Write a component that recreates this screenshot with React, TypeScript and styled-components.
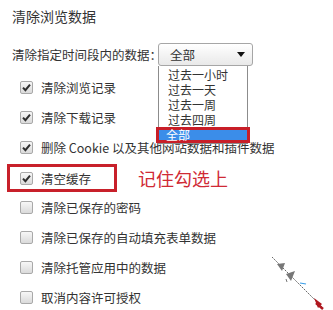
import React from 'react';
import styled, { createGlobalStyle } from 'styled-components';

const GlobalStyle = createGlobalStyle`
  html, body {
    margin: 0;
    padding: 0;
    background: #fff;
  }
  body {
    font-family: "Noto Sans CJK SC", "DejaVu Sans", sans-serif;
    color: #333;
  }
`;

const ranges = ['过去一小时', '过去一天', '过去一周', '过去四周', '全部'];

type Item = { label: string; checked: boolean; highlight?: boolean };

const items: Item[] = [
  { label: '清除浏览记录', checked: true },
  { label: '清除下载记录', checked: true },
  { label: '删除 Cookie 以及其他网站数据和插件数据', checked: true },
  { label: '清空缓存', checked: true, highlight: true },
  { label: '清除已保存的密码', checked: false },
  { label: '清除已保存的自动填充表单数据', checked: false },
  { label: '清除托管应用中的数据', checked: false },
  { label: '取消内容许可授权', checked: false },
];

const Checkbox = ({ checked }: { checked: boolean }) => (
  <CheckBox>
    {checked && (
      <svg width="11" height="11" viewBox="0 0 11 11">
        <path d="M2 5.6 L4.4 8.2 L9 2.6" fill="none" stroke="#2f2f2f" strokeWidth="2" />
      </svg>
    )}
  </CheckBox>
);

const App = () => {
  return (
    <Page>
      <GlobalStyle />
      <Title>清除浏览数据</Title>
      <TimeRow>
        <TimeLabel>清除指定时间段内的数据：</TimeLabel>
        <SelectWrap>
          <Select>
            <span>全部</span>
            <Arrow />
          </Select>
          <Options>
            {ranges.map((r, i) => (
              <Option key={r} selected={i === ranges.length - 1}>
                {r}
              </Option>
            ))}
          </Options>
        </SelectWrap>
      </TimeRow>
      <List>
        {items.map((it) => (
          <Row key={it.label}>
            {it.highlight ? (
              <>
                <Highlight>
                  <Checkbox checked={it.checked} />
                  <Label>{it.label}</Label>
                </Highlight>
                <Note>记住勾选上</Note>
              </>
            ) : (
              <Plain>
                <Checkbox checked={it.checked} />
                <Label>{it.label}</Label>
              </Plain>
            )}
          </Row>
        ))}
      </List>
      {/* 鼠标拖动残影 */}
      <Cursor width="60" height="60" viewBox="0 0 60 60">
        <line x1="2" y1="2" x2="52" y2="52" stroke="#444" strokeWidth="0.8" strokeDasharray="2 1" />
        <path d="M7 9 L15 8 L12 16 Z" fill="#777" />
        <path d="M16 19 L25 16 L21 26 Z" fill="#777" />
        <path d="M16 24 L17 27" stroke="#777" strokeWidth="1" />
        <path d="M30 28 L36 29" stroke="#3a9ee8" strokeWidth="1.2" />
        <path d="M44 43 L52 49 L48 53 Z" fill="#b01820" />
        <path d="M46 48 L53 54" stroke="#b01820" strokeWidth="2.5" />
      </Cursor>
    </Page>
  );
};

export default App;

const Page = styled.div`
  position: relative;
  width: 333px;
  height: 310px;
  overflow: hidden;
  padding-top: 8px;
  box-sizing: border-box;
`;

const Title = styled.div`
  margin-left: 12px;
  font-size: 14px;
  line-height: 16px;
  height: 16px;
`;

const TimeRow = styled.div`
  display: flex;
  align-items: center;
  margin: 19px 0 0 12px;
  height: 23px;
`;

const TimeLabel = styled.span`
  font-size: 12.5px;
  width: 146px;
  white-space: nowrap;
`;

const SelectWrap = styled.div`
  position: relative;
`;

const Select = styled.div`
  box-sizing: border-box;
  width: 95px;
  height: 23px;
  border: 1px solid #a6a6a6;
  border-radius: 3px;
  background: linear-gradient(#ffffff, #e9e9e9);
  display: flex;
  align-items: center;
  justify-content: space-between;
  padding: 0 7px 0 11px;
  font-size: 12.5px;
`;

const Arrow = styled.span`
  width: 0;
  height: 0;
  border-left: 4px solid transparent;
  border-right: 4px solid transparent;
  border-top: 5px solid #111;
`;

const Options = styled.div`
  position: absolute;
  left: 0;
  top: 23px;
  width: 90px;
  box-sizing: border-box;
  background: #fff;
  border: 1px solid #8c8c8c;
  border-top: none;
  padding-top: 1px;
  z-index: 2;
`;

const Option = styled.div<{ selected?: boolean }>`
  font-size: 12px;
  line-height: 15px;
  height: 15px;
  padding-left: 9px;
  white-space: nowrap;
  color: ${(p) => (p.selected ? '#fff' : '#333')};
  ${(p) =>
    p.selected &&
    `
    background: #3b8de9;
    border: 3px solid #c81e28;
    margin: 0 -3px 0 -3px;
    height: 16px;
    line-height: 10px;
    padding-left: 7px;
    box-sizing: border-box;
  `}
`;

const List = styled.div`
  margin-top: 6px;
  display: flex;
  flex-direction: column;
`;

const Row = styled.div`
  height: 30px;
  display: flex;
  align-items: center;
`;

const Plain = styled.div`
  display: flex;
  align-items: center;
  padding-left: 20px;
`;

const Highlight = styled.div`
  display: flex;
  align-items: center;
  box-sizing: border-box;
  width: 110px;
  height: 28px;
  margin-left: 7px;
  margin-top: 2px;
  padding-left: 10px;
  border: 3px solid #c8202a;
`;

const CheckBox = styled.span`
  box-sizing: border-box;
  width: 13px;
  height: 13px;
  border: 1px solid #a9a9a9;
  border-radius: 2px;
  background: linear-gradient(#f7f7f7, #dadada);
  display: inline-flex;
  align-items: center;
  justify-content: center;
`;

const Label = styled.span`
  margin-left: 8px;
  font-size: 12.5px;
  white-space: nowrap;
`;

const Note = styled.span`
  margin: 2px 0 0 21px;
  font-size: 18px;
  color: #d02a35;
`;

const Cursor = styled.svg`
  position: absolute;
  left: 270px;
  top: 255px;
`;
